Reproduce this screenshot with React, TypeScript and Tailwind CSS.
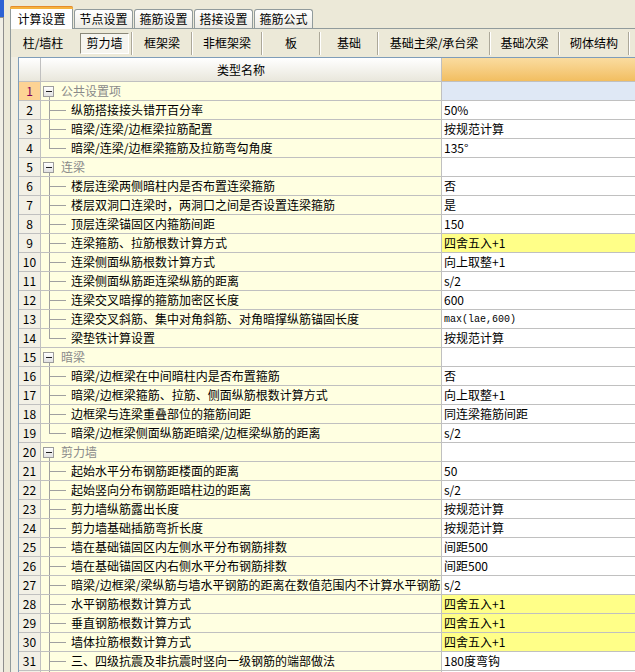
import React from "react";

type Row = { n: number; t: string; v?: string; g?: boolean; last?: boolean; hi?: boolean; mono?: boolean; sel?: boolean };

const rows: Row[] = [
  { n: 1, t: "公共设置项", g: true, sel: true },
  { n: 2, t: "纵筋搭接接头错开百分率", v: "50%" },
  { n: 3, t: "暗梁/连梁/边框梁拉筋配置", v: "按规范计算" },
  { n: 4, t: "暗梁/连梁/边框梁箍筋及拉筋弯勾角度", v: "135°", last: true },
  { n: 5, t: "连梁", g: true },
  { n: 6, t: "楼层连梁两侧暗柱内是否布置连梁箍筋", v: "否" },
  { n: 7, t: "楼层双洞口连梁时，两洞口之间是否设置连梁箍筋", v: "是" },
  { n: 8, t: "顶层连梁锚固区内箍筋间距", v: "150" },
  { n: 9, t: "连梁箍筋、拉筋根数计算方式", v: "四舍五入+1", hi: true },
  { n: 10, t: "连梁侧面纵筋根数计算方式", v: "向上取整+1" },
  { n: 11, t: "连梁侧面纵筋距连梁纵筋的距离", v: "s/2" },
  { n: 12, t: "连梁交叉暗撑的箍筋加密区长度", v: "600" },
  { n: 13, t: "连梁交叉斜筋、集中对角斜筋、对角暗撑纵筋锚固长度", v: "max(lae,600)", mono: true },
  { n: 14, t: "梁垫铁计算设置", v: "按规范计算", last: true },
  { n: 15, t: "暗梁", g: true },
  { n: 16, t: "暗梁/边框梁在中间暗柱内是否布置箍筋", v: "否" },
  { n: 17, t: "暗梁/边框梁箍筋、拉筋、侧面纵筋根数计算方式", v: "向上取整+1" },
  { n: 18, t: "边框梁与连梁重叠部位的箍筋间距", v: "同连梁箍筋间距" },
  { n: 19, t: "暗梁/边框梁侧面纵筋距暗梁/边框梁纵筋的距离", v: "s/2", last: true },
  { n: 20, t: "剪力墙", g: true },
  { n: 21, t: "起始水平分布钢筋距楼面的距离", v: "50" },
  { n: 22, t: "起始竖向分布钢筋距暗柱边的距离", v: "s/2" },
  { n: 23, t: "剪力墙纵筋露出长度", v: "按规范计算" },
  { n: 24, t: "剪力墙基础插筋弯折长度", v: "按规范计算" },
  { n: 25, t: "墙在基础锚固区内左侧水平分布钢筋排数", v: "间距500" },
  { n: 26, t: "墙在基础锚固区内右侧水平分布钢筋排数", v: "间距500" },
  { n: 27, t: "暗梁/边框梁/梁纵筋与墙水平钢筋的距离在数值范围内不计算水平钢筋", v: "s/2" },
  { n: 28, t: "水平钢筋根数计算方式", v: "四舍五入+1", hi: true },
  { n: 29, t: "垂直钢筋根数计算方式", v: "四舍五入+1", hi: true },
  { n: 30, t: "墙体拉筋根数计算方式", v: "四舍五入+1", hi: true },
  { n: 31, t: "三、四级抗震及非抗震时竖向一级钢筋的端部做法", v: "180度弯钩" },
];

const tabs = ["计算设置", "节点设置", "箍筋设置", "搭接设置", "箍筋公式"];

function Sep() {
  return <div className="w-[2px] h-[23px] shrink-0 border-l border-[#aca899] border-r border-r-white" />;
}

function TreeCell({ r }: { r: Row }) {
  return (
    <div className="relative w-[401px] shrink-0 h-full border-r border-[#c0c0c0] bg-[#ffffe1] flex items-center overflow-hidden whitespace-nowrap">
      {r.g ? (
        <>
          <span className="absolute left-[2px] top-[4px] w-[11px] h-[11px] border border-[#9c9c9c] bg-linear-to-b from-white to-[#e2e2e2] flex items-center justify-center">
            <span className="w-[6px] h-px bg-[#202020]" />
          </span>
          <span className="absolute left-[8px] top-[15px] bottom-0 w-px bg-[#a0a0a0]" />
          <span className="pl-[20px] text-[#8a8a8a]">{r.t}</span>
        </>
      ) : (
        <>
          <span className={r.last ? "absolute left-[8px] top-0 h-[10px] w-px bg-[#a0a0a0]" : "absolute left-[8px] top-0 h-full w-px bg-[#a0a0a0]"} />
          <span className="absolute left-[8px] top-[9px] w-[17px] h-px bg-[#a0a0a0]" />
          <span className="pl-[30px] text-black">{r.t}</span>
        </>
      )}
    </div>
  );
}

export default function App() {
  return (
    <div
      className="w-[635px] h-[672px] overflow-hidden bg-[#ece9d8] flex text-[12px] text-black"
      style={{ fontFamily: '"SimSun", "Noto Sans CJK SC", sans-serif' }}
    >
      {/* left neighbour panel edge */}
      <div className="w-[4px] shrink-0 flex flex-col">
        <div className="h-[17px] bg-[#2d62d4]" />
        <div className="flex-1 bg-[#f1efe6] border-r border-[#8e8e8e] border-t border-t-[#8e8e8e]" />
      </div>
      <div className="w-[6px] shrink-0" />

      <div className="flex-1 min-w-0 flex flex-col">
        {/* tab headers */}
        <div className="h-[28px] flex items-end shrink-0 relative z-10">
          {tabs.map((t, i) =>
            i === 0 ? (
              <div key={t} className="w-[63px] h-[23px] -mb-px shrink-0 bg-white border border-b-0 border-[#919b9c] rounded-t-[3px] flex flex-col">
                <div className="h-[3px] bg-[#f5b33f] rounded-t-[2px] -mx-px -mt-px border-t border-[#e68b2c]" />
                <div className="flex-1 flex items-center justify-center text-[12px]">{t}</div>
              </div>
            ) : (
              <div key={t} className="w-[59px] h-[19px] ml-px shrink-0 bg-linear-to-b from-white to-[#ecebe4] border border-b-0 border-[#919b9c] rounded-t-[3px] flex items-center justify-center text-[12px]">
                {t}
              </div>
            )
          )}
        </div>

        {/* tab page */}
        <div className="flex-1 min-h-0 flex flex-col border-l border-t border-[#919b9c] bg-[#f0eee3]">
          {/* sub tabs */}
          <div className="h-[28px] shrink-0 flex items-center bg-[#ece9d8] text-[12px] whitespace-nowrap">
            <div className="w-[69px] shrink-0 pr-[5px] text-center">柱/墙柱</div>
            <div className="w-[51px] shrink-0 flex items-center">
              <div className="w-[49px] h-[21px] border border-[#8a8778] border-b-white border-r-white bg-[#f6f5ef] flex items-center justify-center">剪力墙</div>
            </div>
            <Sep />
            <div className="w-[58px] shrink-0 text-center">框架梁</div>
            <Sep />
            <div className="w-[68px] shrink-0 text-center">非框架梁</div>
            <Sep />
            <div className="w-[56px] shrink-0 text-center">板</div>
            <Sep />
            <div className="w-[56px] shrink-0 text-center">基础</div>
            <Sep />
            <div className="w-[110px] shrink-0 text-center">基础主梁/承台梁</div>
            <Sep />
            <div className="w-[67px] shrink-0 text-center">基础次梁</div>
            <Sep />
            <div className="w-[68px] shrink-0 text-center">砌体结构</div>
            <Sep />
          </div>

          {/* grid */}
          <div className="flex-1 min-h-0 ml-[7px] border-t border-l border-[#7f9db9] bg-white flex flex-col overflow-hidden">
            <div className="h-[24px] shrink-0 flex border-b border-[#c0c0c0]">
              <div className="w-[22px] shrink-0 border-r border-[#c0c0c0] bg-linear-to-b from-white to-[#e9e7dc]" />
              <div className="w-[401px] shrink-0 border-r border-[#c0c0c0] bg-linear-to-b from-white to-[#e9e7dc] flex items-center justify-center">
                类型名称
              </div>
              <div className="flex-1 bg-linear-to-b from-[#fadc9f] to-[#f2be60]" />
            </div>

            {rows.map((r) => (
              <div key={r.n} className="h-[19px] shrink-0 flex border-b border-[#c0c0c0]">
                <div
                  className={
                    r.sel
                      ? "w-[22px] shrink-0 border-r border-[#c0c0c0] bg-[#fdd394] text-[#80005a] flex items-center justify-center"
                      : "w-[22px] shrink-0 border-r border-[#c0c0c0] bg-[#f2f0e6] flex items-center justify-center"
                  }
                >
                  {r.n}
                </div>
                <TreeCell r={r} />
                <div
                  className={
                    "flex-1 min-w-0 pl-[2px] flex items-center whitespace-nowrap overflow-hidden " +
                    (r.sel ? "bg-[#dfe8f5]" : r.hi ? "bg-[#ffff88]" : "bg-white")
                  }
                >
                  {r.mono ? (
                    <span className="text-[10px]" style={{ fontFamily: '"Liberation Mono", monospace' }}>{r.v}</span>
                  ) : (
                    r.v
                  )}
                </div>
              </div>
            ))}

            {/* partly visible next row */}
            <div className="h-[19px] shrink-0 flex">
              <div className="w-[22px] shrink-0 border-r border-[#c0c0c0] bg-[#f2f0e6]" />
              <div className="relative w-[401px] shrink-0 border-r border-[#c0c0c0] bg-[#ffffe1]">
                <span className="absolute left-[8px] top-0 h-full w-px bg-[#a0a0a0]" />
              </div>
              <div className="flex-1 bg-white" />
            </div>
          </div>
        </div>
      </div>
    </div>
  );
}
